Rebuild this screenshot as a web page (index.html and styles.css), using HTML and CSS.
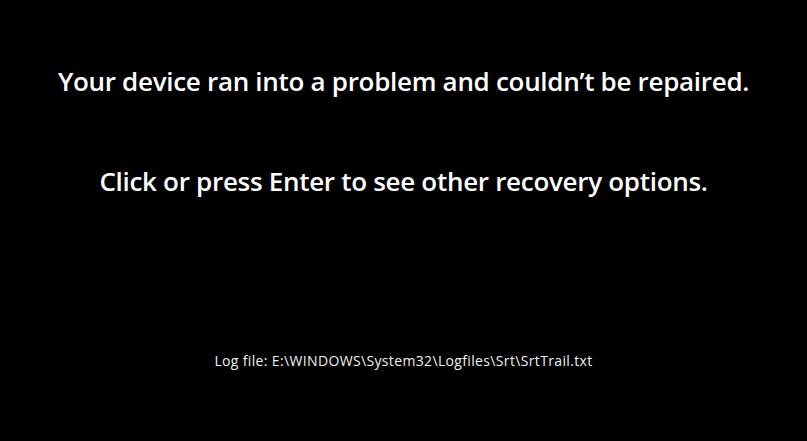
FILE: index.html
```html
<!DOCTYPE html>
<html lang="en">
<head>
<meta charset="utf-8">
<title>Recovery</title>
<link rel="stylesheet" href="styles.css">
</head>
<body>
<main class="screen">
  <h1 class="msg msg-first">Your device ran into a problem and couldn’t be repaired.</h1>
  <h2 class="msg msg-second">Click or press Enter to see other recovery options.</h2>
  <p class="log">Log file: E:\WINDOWS\System32\Logfiles\Srt\SrtTrail.txt</p>
</main>
</body>
</html>
```
FILE: styles.css
```css
html, body {
  margin: 0;
  padding: 0;
  background: #000;
}
.screen {
  width: 807px;
  height: 441px;
  display: flex;
  flex-direction: column;
  align-items: center;
  color: #fff;
  font-family: "Open Sans", "Noto Sans", sans-serif;
}
.msg {
  margin: 0;
  font-size: 26px;
  font-weight: 600;
  line-height: 32px;
  letter-spacing: -0.3px;
  white-space: nowrap;
}
.msg-first {
  margin-top: 65px;
}
.msg-second {
  margin-top: 68px;
}
.log {
  margin: 154px 0 0;
  font-size: 14px;
  line-height: 20px;
  letter-spacing: 0.35px;
  color: #f0f0f0;
  white-space: nowrap;
}
```
